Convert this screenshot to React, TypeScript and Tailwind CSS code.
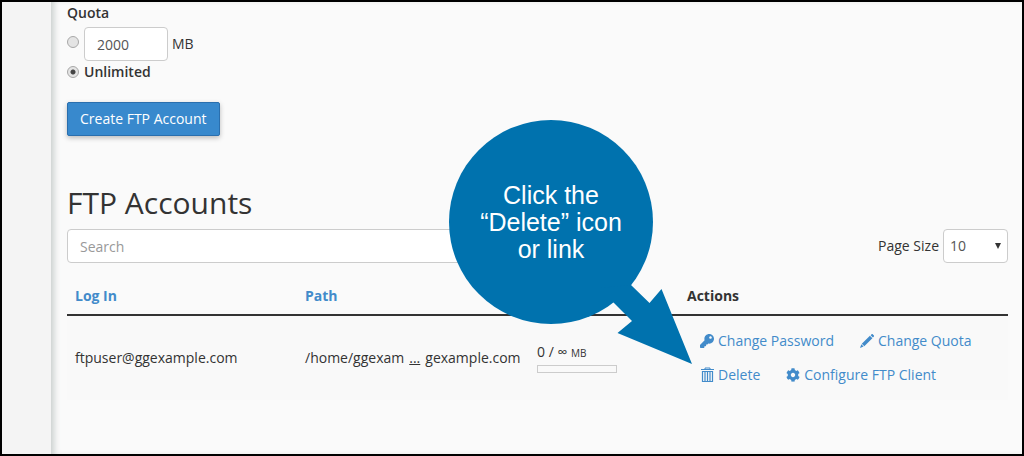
import { useState } from "react";
import { FaCog, FaKey } from "react-icons/fa";

const PAGE_SIZES = [10, 20, 50, 100];

const ACCOUNTS = [
  {
    login: "ftpuser@ggexample.com",
    pathStart: "/home/ggexam",
    pathEnd: "gexample.com",
    used: 0,
    limit: "∞",
  },
];

function PencilIcon() {
  return (
    <svg viewBox="0 0 14 14" className="w-3.5 h-3.5 shrink-0" fill="currentColor" aria-hidden="true">
      <path d="M10.600 1.200 11.400.4c.5-.5 1-.5 1.500 0l.8.8c.5.5.5 1 0 1.500l-.8.8zM9.900 1.700 12.400 4.200 4.300 12.200 1.800 9.700zM1.300 10.300 3.600 12.600 0 14z" />
    </svg>
  );
}

function TrashIcon() {
  return (
    <svg viewBox="0 0 14 16" className="w-3.5 h-4 shrink-0" fill="none" stroke="currentColor" aria-hidden="true">
      <path d="M1 2.500h13M5 2.500v-1.500h5v1.500" />
      <path strokeWidth="1.2" d="M2.500 4.500v10h10v-10zM5 5v9M7.500 5v9M10 5v9" />
    </svg>
  );
}

function ActionLinks() {
  const actions = [
    { label: "Change Password", icon: <FaKey className="w-3.5 h-3.5 shrink-0" /> },
    { label: "Change Quota", icon: <PencilIcon /> },
    { label: "Delete", icon: <TrashIcon /> },
    { label: "Configure FTP Client", icon: <FaCog className="w-3.5 h-3.5 shrink-0" /> },
  ];

  return (
    <div className="flex flex-wrap">
      {actions.map((action) => (
        <a
          key={action.label}
          href="#"
          className="inline-flex items-center gap-1 h-[34px] px-[13px] text-[#428bca] whitespace-nowrap hover:underline"
        >
          {action.icon}
          {action.label}
        </a>
      ))}
    </div>
  );
}

function QuotaForm() {
  const [unlimited, setUnlimited] = useState(true);
  const [quota, setQuota] = useState("2000");

  const radio =
    "appearance-none w-3 h-3 shrink-0 rounded-full border border-[#a8a8a8] bg-[#e4e4e4] checked:bg-[radial-gradient(circle,#444_0_2px,#e4e4e4_3px)]";

  return (
    <form onSubmit={(e) => e.preventDefault()}>
      <fieldset>
        <legend className="font-semibold">Quota</legend>
        <div className="flex items-center mt-1">
          <input
            type="radio"
            name="quota"
            aria-label="Limited quota"
            checked={!unlimited}
            onChange={() => setUnlimited(false)}
            className={`${radio} mr-[5px] mb-1`}
          />
          <input
            id="quota-value"
            type="text"
            value={quota}
            onChange={(e) => setQuota(e.target.value)}
            className="w-[84px] h-[34px] px-3 bg-white border border-[#ccc] rounded text-[#555]"
          />
          <label htmlFor="quota-value" className="ml-1">MB</label>
        </div>
        <div className="flex items-center mt-px">
          <input
            id="quota-unlimited"
            type="radio"
            name="quota"
            checked={unlimited}
            onChange={() => setUnlimited(true)}
            className={`${radio} mr-[5px]`}
          />
          <label htmlFor="quota-unlimited" className="font-semibold">Unlimited</label>
        </div>
      </fieldset>
      <button
        type="submit"
        className="mt-5 h-[34px] px-3 bg-[#3889cd] border border-[#2a6fae] rounded-xs text-white shadow-[0_2px_5px_rgba(0,0,0,0.25)]"
      >
        Create FTP Account
      </button>
    </form>
  );
}

function Callout() {
  return (
    <div className="absolute left-[447px] top-[118px] w-[243px] h-[245px] pointer-events-none">
      <svg viewBox="0 0 243 245" className="absolute inset-0 w-full h-full" fill="#0072ae" aria-hidden="true">
        <circle cx="102" cy="102" r="102" />
        <path d="M182 165 200.500 183 212.500 169 243 244 168.500 213 183 201 150 168z" />
      </svg>
      <p className="relative w-[204px] h-[204px] flex items-center justify-center text-center font-['Liberation_Sans',Arial,sans-serif] text-[25px] leading-[27px] text-white">
        Click the
        <br />
        “Delete” icon
        <br />
        or link
      </p>
    </div>
  );
}

export default function App() {
  const [search, setSearch] = useState("");
  const [pageSize, setPageSize] = useState(10);

  return (
    <div className="relative flex min-h-screen overflow-hidden border-2 border-black bg-[#f4f4f4] font-['Open_Sans',sans-serif] text-sm leading-5 text-[#333]">
      <aside className="w-[49px] shrink-0" />
      <main className="flex-1 min-w-0 pt-px pl-4 pr-3.5 bg-[#fafafa] shadow-[inset_6px_0_6px_-3px_#c9cfcd]">
        <QuotaForm />

        <h2 className="mt-[50px] mb-2.5 text-[30px] leading-[33px]">FTP Accounts</h2>

        <div className="flex items-center justify-between">
          <input
            type="search"
            placeholder="Search"
            aria-label="Search"
            value={search}
            onChange={(e) => setSearch(e.target.value)}
            className="w-1/2 h-[34px] px-3 bg-white border border-[#ccc] rounded placeholder:text-[#999]"
          />
          <div className="flex items-center gap-1">
            <label htmlFor="page-size">Page Size</label>
            <div className="relative">
              <select
                id="page-size"
                value={pageSize}
                onChange={(e) => setPageSize(Number(e.target.value))}
                className="appearance-none w-[65px] h-[34px] px-1.5 bg-white border border-[#ccc] rounded text-[#555]"
              >
                {PAGE_SIZES.map((size) => (
                  <option key={size} value={size}>{size}</option>
                ))}
              </select>
              <svg viewBox="0 0 6 6" className="absolute right-[7px] top-3.5 w-1.5 h-1.5 pointer-events-none" aria-hidden="true">
                <path d="M0 0h6L3 6z" fill="#333" />
              </svg>
            </div>
          </div>
        </div>

        <table className="w-full mt-[15px] table-fixed border-collapse text-left">
          <thead>
            <tr className="border-b-2 border-[#333]">
              <th className="w-[230px] p-2 font-bold"><a href="#" className="text-[#428bca]">Log In</a></th>
              <th className="w-[232px] p-2 font-bold"><a href="#" className="text-[#428bca]">Path</a></th>
              <th className="w-[150px] p-2" aria-label="Usage" />
              <th className="p-2 font-bold">Actions</th>
            </tr>
          </thead>
          <tbody>
            {ACCOUNTS.map((account) => (
              <tr key={account.login} className="bg-[#f9f9f9]">
                <td className="p-2">{account.login}</td>
                <td className="p-2 whitespace-nowrap">
                  {account.pathStart}
                  <a href="#" className="mx-[5px] underline">...</a>
                  {account.pathEnd}
                </td>
                <td className="p-2">
                  <div>
                    {account.used} / {account.limit} <span className="text-[10px]">MB</span>
                  </div>
                  <div className="w-20 h-2 mt-0.5 mb-0.5 border border-[#ccc]" />
                </td>
                <td className="py-2 pl-2">
                  <ActionLinks />
                </td>
              </tr>
            ))}
          </tbody>
        </table>
      </main>
      <Callout />
    </div>
  );
}
